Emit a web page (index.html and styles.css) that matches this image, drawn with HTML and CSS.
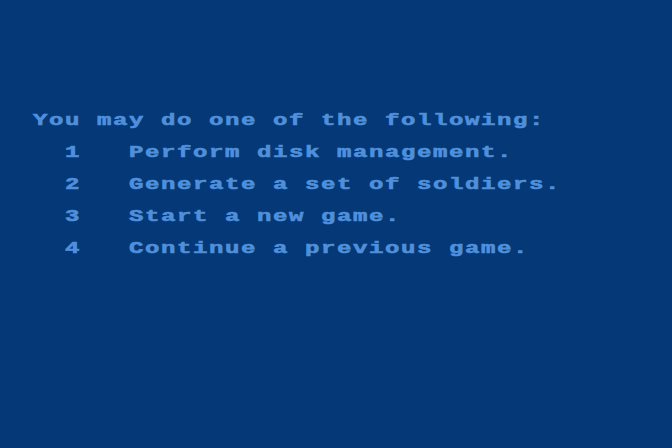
FILE: index.html
```html
<!DOCTYPE html>
<html lang="en">
<head>
<meta charset="utf-8">
<title>Main Menu</title>
<link rel="stylesheet" href="styles.css">
</head>
<body>
  <main class="screen">
    <div class="text">
      <p class="prompt">You may do one of the following:</p>
      <ol class="menu">
        <li class="item"><span class="num">1</span><span class="label">Perform disk management.</span></li>
        <li class="item"><span class="num">2</span><span class="label">Generate a set of soldiers.</span></li>
        <li class="item"><span class="num">3</span><span class="label">Start a new game.</span></li>
        <li class="item"><span class="num">4</span><span class="label">Continue a previous game.</span></li>
      </ol>
    </div>
  </main>
</body>
</html>
```

FILE: styles.css
```css
html, body {
  margin: 0;
  padding: 0;
  background: #053876;
}

.screen {
  width: 672px;
  height: 448px;
  box-sizing: border-box;
  padding: 105px 0 0 33px;
  overflow: hidden;
  background: #053876;
}

/* Text is laid out on a narrow grid, then stretched 1.5x so each
   character cell becomes 16px wide like the 8-bit console font. */
.text {
  width: 426px;
  transform: scaleX(1.5);
  transform-origin: 0 0;
  font-family: "Liberation Mono", "DejaVu Sans Mono", monospace;
  font-weight: bold;
  font-size: 16px;
  line-height: 32px;
  letter-spacing: 1.067px;
  color: #4f8fdc;
  white-space: nowrap;
  -webkit-text-stroke: 0.6px #4f8fdc;
}

.prompt {
  margin: 0;
}

.menu {
  list-style: none;
  margin: 0;
  padding: 0;
}

.item {
  display: flex;
}

.num {
  width: 42.67px;
  padding-left: 21.33px;
}
```
